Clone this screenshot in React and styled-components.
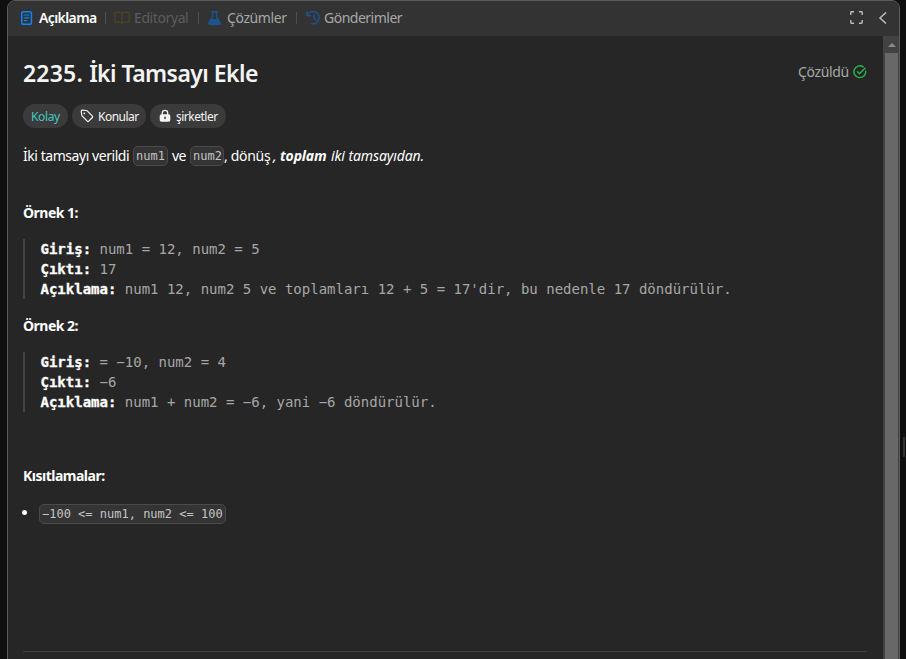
import React from "react";
import styled, { createGlobalStyle } from "styled-components";

const Global = createGlobalStyle`
  * { box-sizing: border-box; }
  html, body { margin: 0; height: 100%; overflow: hidden; background: #0f0f0f; }
  body { font-family: "Noto Sans", "Open Sans", sans-serif; font-size: 14px; color: #f5f5f5; }
  #root { height: 100%; }
`;
const Shell = styled.div`
  display: flex;
  height: 659px;
  width: 906px;
  padding-left: 7px;
  overflow: hidden;
`;
const Panel = styled.main`
  display: flex;
  flex-direction: column;
  width: 893px;
  height: 680px;
  flex: none;
  border: 1px solid #5c5c5c;
  border-radius: 8px;
  background: #262626;
  overflow: hidden;
`;
const Gutter = styled.div`
  display: flex;
  align-items: flex-start;
  padding: 437px 0 0 3px;
`;
const Grip = styled.div`
  width: 2px;
  height: 20px;
  background: #333;
`;
const TabBar = styled.header`
  display: flex;
  align-items: center;
  height: 35px;
  flex: none;
  padding: 0 11px 2px 12px;
  background: #333;
`;
const Tab = styled.div`
  display: flex;
  align-items: center;
  height: 20px;
  gap: ${(p) => p.$gap ?? 5}px;
  color: ${(p) => p.$color ?? "#a8a8a8"};
  font-weight: ${(p) => (p.$active ? 600 : 400)};
  svg { flex: none; display: block; }
`;
const Label = styled.span`
  display: inline-block;
  width: ${(p) => p.$w}px;
  letter-spacing: ${(p) => p.$ls ?? 0}px;
  white-space: nowrap;
  line-height: 20px;
`;
const Divider = styled.i`
  width: 1px;
  height: 12px;
  margin: 0 ${(p) => p.$right ?? 8}px 0 ${(p) => p.$left ?? 8}px;
  background: #4f4f4f;
`;
const Tools = styled.div`
  display: flex;
  align-items: center;
  gap: 15px;
  margin-left: auto;
  svg { display: block; }
`;
const Body = styled.div`
  display: flex;
  flex: 1;
`;
const Content = styled.article`
  flex: 1;
  padding: 23px 16px 0 15px;
`;
const Track = styled.div`
  width: 16px;
  background: #424242;
  padding: 0 1px 0 2px;
`;
const Arrow = styled.div`
  height: 17px;
  display: flex;
  align-items: center;
  justify-content: center;
`;
const Thumb = styled.div`
  height: 640px;
  background: #686868;
`;
const Heading = styled.div`
  display: flex;
  justify-content: space-between;
  height: 28px;
`;
const Title = styled.h1`
  margin: 0;
  font-size: 23px;
  line-height: 28px;
  font-weight: 600;
  letter-spacing: -0.55px;
  white-space: nowrap;
`;
const TitleNumber = styled.span`
  letter-spacing: 0.2px;
`;
const Solved = styled.div`
  display: flex;
  align-items: center;
  height: 26px;
  gap: 4px;
  color: #a8a8a8;
`;
const Chips = styled.div`
  display: flex;
  gap: 4px;
  margin-top: 17px;
`;
const Chip = styled.div`
  display: flex;
  align-items: center;
  width: ${(p) => p.$w}px;
  height: 24px;
  padding-left: 8px;
  gap: ${(p) => p.$gap ?? 4}px;
  border-radius: 12px;
  background: #3b3b3b;
  color: ${(p) => p.$color ?? "#f5f5f5"};
  font-size: 12px;
  svg { flex: none; }
  span { padding-top: 2px; }
`;
const Statement = styled.p`
  display: flex;
  align-items: center;
  height: 20px;
  margin: 18px 0 0;
  color: #fff;
`;
const Code = styled.code`
  display: inline-block;
  width: ${(p) => p.$w}px;
  height: 20px;
  padding-left: 2px;
  margin-right: ${(p) => p.$mr ?? 0}px;
  border: 1px solid #4a4a4a;
  border-radius: 5px;
  background: #343434;
  color: #c4c4c4;
  font: 12px/18px "DejaVu Sans Mono", monospace;
  white-space: nowrap;
`;
const Strong = styled.p`
  margin: ${(p) => p.$top}px 0 0;
  height: 20px;
  line-height: 20px;
  font-weight: 700;
  color: #fff;
  letter-spacing: ${(p) => p.$ls ?? 0}px;
`;
const Example = styled.pre`
  margin: 16px 0 0;
  padding-left: 15.5px;
  border-left: 2px solid #444;
  color: #a6a6a6;
  font: 14px/20px "DejaVu Sans Mono", monospace;
  b { color: #fff; -webkit-text-stroke: 0.3px #fff; }
`;
const List = styled.ul`
  display: flex;
  align-items: center;
  gap: 12px;
  margin: 18px 0 0;
  padding: 0;
  list-style: none;
`;
const Item = styled.li`
  display: flex;
  align-items: center;
  gap: 12px;
`;
const Dot = styled.i`
  width: 5px;
  height: 5px;
  border-radius: 50%;
  background: #fff;
  margin: -3px 0 0 -1px;
`;
const Rule = styled.hr`
  width: 844px;
  height: 1px;
  margin: 127px 0 0;
  border: 0;
  background: #424242;
`;
const Em = styled.em`
  display: inline-block;
  width: ${(p) => p.$w}px;
  letter-spacing: ${(p) => p.$ls ?? 0}px;
  font-weight: ${(p) => (p.$bold ? 700 : 400)};
  line-height: 20px;
  white-space: nowrap;
`;

const DocIcon = () => (
  <svg width="13" height="14" viewBox="0 0 13 14" fill="none" stroke="#0a84ff" strokeWidth="1.5" strokeLinecap="round">
    <rect x="1.75" y=".75" width="9.7" height="12.5" rx="1.8" />
    <path d="M4.3 4h4.6M4.3 6.8h4.6M4.3 9.6h2.5" strokeWidth="1.2" />
  </svg>
);
const BookIcon = () => (
  <svg width="16" height="14" viewBox="0 0 16 14" fill="none" stroke="#514323" strokeWidth="1.3" strokeLinejoin="round">
    <path d="M8 2.5C7.3 1.5 6.3 1.4 5.3 1.4H1.8Q.8 1.4.8 2.4v7.8q0 1 1 1H5.5c1.2 0 2 .3 2.5 1.3.5-1 1.3-1.3 2.5-1.3h3.7q1 0 1-1V2.4q0-1-1-1h-3.5C9.700 1.400 8.700 1.500 8 2.500ZM8 2.500v10" />
  </svg>
);
const FlaskIcon = () => (
  <svg width="13" height="14" viewBox="0 0 13 14" fill="none" stroke="#1d5391" strokeWidth="1.4" strokeLinejoin="round">
    <path d="M3.200.8h6.600M4.600.8v4.700L1 11.700q-.6 1.500.9 1.500h9.200q1.500 0 .9-1.500L8.400 5.500V.8" />
    <path d="M3.500 8h6l2.500 4.200q.3 1-.7 1H1.700q-1 0-.7-1Z" fill="#1d5391" stroke="none" />
  </svg>
);
const HistoryIcon = () => (
  <svg width="15" height="14" viewBox="0 0 15 14" fill="none" stroke="#1d5391" strokeWidth="1.4" strokeLinecap="round" strokeLinejoin="round">
    <path d="M1 1v3.500l3.500.2M1.300 4.200A6.200 6.200 0 1 1 5.500 12.700M7.800 3.800v3.500l2.300 1.700" />
  </svg>
);
const ExpandIcon = () => (
  <svg width="13" height="13" viewBox="0 0 13 13" fill="none" stroke="#bdbdbd" strokeWidth="1.400">
    <path d="M.8 4V1.500q0-.7.7-.7H4M9 .8h2.500q.7 0 .7.7V4M12.200 9v2.500q0 .7-.7.7H9M4 12.200H1.500q-.7 0-.7-.7V9" />
  </svg>
);
const BackIcon = () => (
  <svg width="10" height="12" viewBox="0 0 10 12" fill="none" stroke="#bdbdbd" strokeWidth="1.500">
    <path d="M8 .5 2 6 8 11.500" />
  </svg>
);
const CheckIcon = () => (
  <svg width="14" height="14" viewBox="0 0 14 14" fill="none" stroke="#28b84a" strokeWidth="1.400" strokeLinecap="round" strokeLinejoin="round">
    <path d="M10.200 1.900A5.900 5.900 0 1 0 12.700 6.200M4.500 6.800l2 2L12 3.300" />
  </svg>
);
const TagIcon = () => (
  <svg width="14" height="14" viewBox="0 0 14 14" fill="none" stroke="#f5f5f5" strokeWidth="1.200" strokeLinejoin="round">
    <path d="M1.300 2.600 1.700 6q.1.500.4.800l5.200 5.400q.7.700 1.400 0l3.700-3.700q.7-.7 0-1.400L7.200 1.900q-.3-.3-.8-.4L2.500 1.200q-1.300-.1-1.200 1.400Z" />
    <circle cx="4.300" cy="4.300" r=".9" fill="#f5f5f5" stroke="none" />
  </svg>
);
const LockIcon = () => (
  <svg width="14" height="14" viewBox="0 0 14 14" fill="none">
    <path d="M4.300 6V4q0-2.600 2.700-2.600T9.700 4v2" stroke="#f5f5f5" strokeWidth="1.300" />
    <rect x="1.700" y="5.300" width="10.600" height="7.400" rx="1.700" fill="#f5f5f5" />
    <path d="M7 8.200v1.400" stroke="#3b3b3b" strokeWidth="1.500" strokeLinecap="round" />
  </svg>
);

export default function App() {
  return (
    <>
      <Global />
      <Shell>
        <Panel>
          <TabBar>
            <Tab $active $color="#fff" $gap={6}><DocIcon /><Label $w={58} $ls={-0.6}>Açıklama</Label></Tab>
            <Divider />
            <Tab $color="#5c5c5c" $gap={4}><BookIcon /><Label $w={55} $ls={-0.4}>Editoryal</Label></Tab>
            <Divider $left={9} $right={9} />
            <Tab $gap={6}><FlaskIcon /><Label $w={60} $ls={-0.4}>Çözümler</Label></Tab>
            <Divider $left={9} $right={9} />
            <Tab $gap={3}><HistoryIcon /><Label $w={79} $ls={-0.5}>Gönderimler</Label></Tab>
            <Tools><ExpandIcon /><BackIcon /></Tools>
          </TabBar>
          <Body>
            <Content>
              <Heading>
                <Title><TitleNumber>2235. </TitleNumber>İki Tamsayı Ekle</Title>
                <Solved><Label $w={51} $ls={-0.35}>Çözüldü</Label><CheckIcon /></Solved>
              </Heading>
              <Chips>
                <Chip $w={45} $color="#46c6c2"><Label $w={30} $ls={-0.35}>Kolay</Label></Chip>
                <Chip $w={74}><TagIcon /><Label $w={42} $ls={-0.5}>Konular</Label></Chip>
                <Chip $w={76}><LockIcon /><Label $w={44} $ls={-0.5}>şirketler</Label></Chip>
              </Chips>
              <Statement>
                <Label $w={110} $ls={-0.45}>İki tamsayı verildi</Label>
                <Code $w={35} $mr={4}>num1</Code>
                <Label $w={18} $ls={-0.5}>ve</Label>
                <Code $w={34}>num2</Code>
                <Label $w={49} $ls={-0.3}>, dönüş</Label>
                <Em $w={7}>,</Em>
                <Em $w={51} $ls={-0.15} $bold>toplam</Em>
                <Em $w={93} $ls={-0.1}>iki tamsayıdan.</Em>
              </Statement>
              <Strong $top={37} $ls={-0.5}>Örnek 1:</Strong>
              <Example>
                <b>Giriş:</b>{" num1 = 12, num2 = 5\n"}
                <b>Çıktı:</b>{" 17\n"}
                <b>Açıklama:</b>{" num1 12, num2 5 ve toplamları 12 + 5 = 17'dir, bu nedenle 17 döndürülür."}
              </Example>
              <Strong $top={17} $ls={-0.5}>Örnek 2:</Strong>
              <Example>
                <b>Giriş:</b>{" = −10, num2 = 4\n"}
                <b>Çıktı:</b>{" −6\n"}
                <b>Açıklama:</b>{" num1 + num2 = −6, yani −6 döndürülür."}
              </Example>
              <Strong $top={54} $ls={-0.5}>Kısıtlamalar:</Strong>
              <List>
                <Item><Dot /><Code $w={187}>{"−100 <= num1, num2 <= 100"}</Code></Item>
              </List>
              <Rule />
            </Content>
            <Track>
              <Arrow>
                <svg width="8" height="4" viewBox="0 0 8 4"><path d="M0 4 4 0l4 4Z" fill="#8b8b8b" /></svg>
              </Arrow>
              <Thumb />
            </Track>
          </Body>
        </Panel>
        <Gutter><Grip /></Gutter>
      </Shell>
    </>
  );
}
